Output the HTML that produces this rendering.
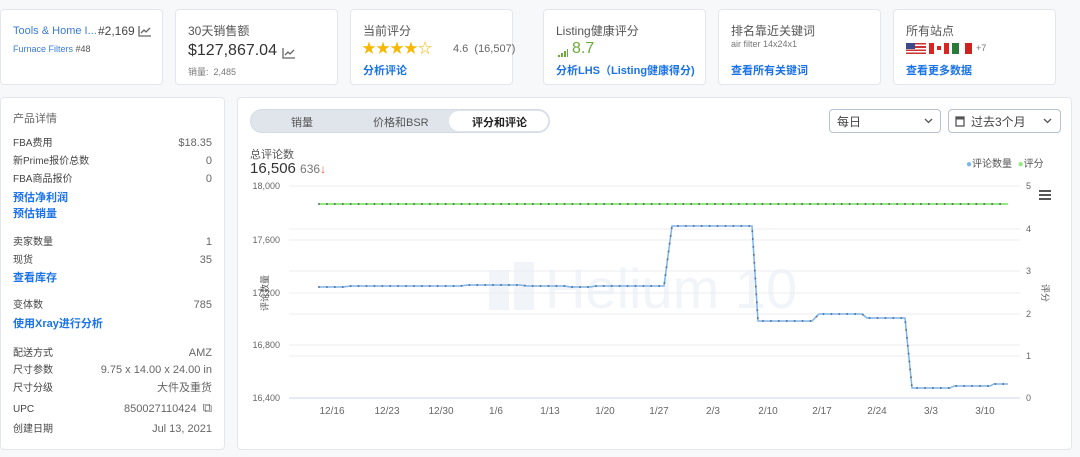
<!DOCTYPE html><html><head><meta charset="utf-8"><style>
*{box-sizing:border-box;margin:0;padding:0}
body{width:1080px;height:457px;background:#f7f8fa;font-family:"Liberation Sans","Noto Sans CJK SC",sans-serif;color:#333;position:relative;overflow:hidden}
.card{position:absolute;background:#fff;border:1px solid #e3e6ec;border-radius:4px}
.t{position:absolute;font-size:12px;color:#555;white-space:nowrap}
.b{color:#1a73e8;font-weight:bold}
.lnk{color:#3a7bd5}
.row{position:absolute;left:12px;right:12px;font-size:10px;color:#444;display:flex;justify-content:space-between;align-items:baseline;line-height:14px}
.row span:last-child{color:#666;font-size:11px}
.blue{position:absolute;left:12px;font-size:11px;color:#1a73e8;font-weight:bold}
</style></head><body>
<div class="card" style="left:0;top:9px;width:163px;height:76px">
<div class="t lnk" style="left:12px;top:15px;font-size:11px">Tools &amp; Home I...</div>
<div class="t" style="left:97px;top:14px;font-size:12px;color:#444">#2,169</div>
<svg style="position:absolute;left:137px;top:15px" width="14" height="12"><path d="M1 1V11H13M3 8L6 5L8 7L12 3" stroke="#666" fill="none" stroke-width="1.3"/></svg>
<div class="t lnk" style="left:12px;top:34px;font-size:9px">Furnace Filters <span style="color:#555">#48</span></div>
</div>
<div class="card" style="left:175px;top:9px;width:163px;height:76px">
<div class="t" style="left:12px;top:12px">30天销售额</div>
<div class="t" style="left:12px;top:32px;font-size:16px;color:#333">$127,867.04</div>
<svg style="position:absolute;left:106px;top:37px" width="14" height="12"><path d="M1 1V11H13M3 8L6 5L8 7L12 3" stroke="#666" fill="none" stroke-width="1.3"/></svg>
<div class="t" style="left:12px;top:55px;font-size:9px;color:#777">销量: &nbsp;2,485</div>
</div>
<div class="card" style="left:350px;top:9px;width:163px;height:76px">
<div class="t" style="left:12px;top:12px">当前评分</div>
<div class="t" style="left:11px;top:28px;font-size:14px;color:#f5b800">★★★★☆</div>
<div class="t" style="left:102px;top:33px;font-size:11px;color:#666">4.6 &nbsp;(16,507)</div>
<div class="t b" style="left:12px;top:52px;font-size:11px">分析评论</div>
</div>
<div class="card" style="left:543px;top:9px;width:163px;height:76px">
<div class="t" style="left:12px;top:12px">Listing健康评分</div>
<svg style="position:absolute;left:14px;top:39px" width="10" height="8"><rect x="0" y="6" width="2" height="2" fill="#6aab3a"/><rect x="3" y="4" width="2" height="4" fill="#6aab3a"/><rect x="6" y="2" width="2" height="6" fill="#6aab3a"/><rect x="9" y="0" width="1" height="8" fill="#6aab3a"/></svg>
<div class="t" style="left:28px;top:30px;font-size:16px;color:#6aab3a">8.7</div>
<div class="t b" style="left:12px;top:52px;font-size:11px">分析LHS（Listing健康得分)</div>
</div>
<div class="card" style="left:718px;top:9px;width:163px;height:76px">
<div class="t" style="left:12px;top:12px">排名靠近关键词</div>
<div class="t" style="left:12px;top:29px;font-size:9px;color:#777">air filter 14x24x1</div>
<div class="t b" style="left:12px;top:52px;font-size:11px">查看所有关键词</div>
</div>
<div class="card" style="left:893px;top:9px;width:163px;height:76px">
<div class="t" style="left:12px;top:12px">所有站点</div>
<div style="position:absolute;left:12px;top:33px;width:20px;height:11px;background:repeating-linear-gradient(#c33 0 1.6px,#fff 1.6px 3.2px)"><div style="width:9px;height:6px;background:#3c4a8a"></div></div>
<div style="position:absolute;left:35px;top:33px;width:20px;height:11px;background:linear-gradient(90deg,#d22 5px,#fff 5px 15px,#d22 15px)"><div style="position:absolute;left:8px;top:3px;width:4px;height:4px;background:#d22"></div></div>
<div style="position:absolute;left:58px;top:33px;width:20px;height:11px;background:linear-gradient(90deg,#2a7a3a 7px,#fff 7px 13px,#c22 13px)"></div>
<div class="t" style="left:82px;top:33px;font-size:9px;color:#777">+7</div>
<div class="t b" style="left:12px;top:52px;font-size:11px">查看更多数据</div>
</div>

<div class="card" style="left:0;top:97px;width:225px;height:353px">
<div class="t" style="left:12px;top:12px;font-size:11px;color:#666">产品详情</div>
<div class="row" style="top:38px"><span>FBA费用</span><span>$18.35</span></div>
<div class="row" style="top:56px"><span>新Prime报价总数</span><span>0</span></div>
<div class="row" style="top:74px"><span>FBA商品报价</span><span>0</span></div>
<div class="blue" style="top:91px">预估净利润</div>
<div class="blue" style="top:107px">预估销量</div>
<div class="row" style="top:137px"><span>卖家数量</span><span>1</span></div>
<div class="row" style="top:155px"><span>现货</span><span>35</span></div>
<div class="blue" style="top:171px">查看库存</div>
<div class="row" style="top:200px"><span>变体数</span><span>785</span></div>
<div class="blue" style="top:217px">使用Xray进行分析</div>
<div class="row" style="top:248px"><span>配送方式</span><span>AMZ</span></div>
<div class="row" style="top:265px"><span>尺寸参数</span><span>9.75 x 14.00 x 24.00 in</span></div>
<div class="row" style="top:283px"><span>尺寸分级</span><span>大件及重货</span></div>
<div class="row" style="top:303px"><span>UPC</span><span>850027110424 &nbsp;<span style="font-size:13px">⧉</span></span></div>
<div class="row" style="top:324px"><span>创建日期</span><span>Jul 13, 2021</span></div>
</div>

<div class="card" style="left:237px;top:97px;width:835px;height:353px"></div>
<div style="position:absolute;left:250px;top:109px;width:300px;height:24px;border-radius:12px;background:#e0e5ec;border:1px solid #d5dbe4"></div>
<div style="position:absolute;left:449px;top:111px;width:99px;height:20px;border-radius:10px;background:#fff"></div>
<div class="t" style="left:291px;top:114px;font-size:11px">销量</div>
<div class="t" style="left:373px;top:114px;font-size:11px">价格和BSR</div>
<div class="t" style="left:472px;top:114px;font-size:11px;font-weight:bold;color:#222">评分和评论</div>
<div style="position:absolute;left:829px;top:109px;width:112px;height:24px;border:1px solid #b8c2d0;border-radius:4px"></div>
<div class="t" style="left:837px;top:113px;font-size:12px;color:#444">每日</div>
<svg style="position:absolute;left:924px;top:118px" width="9" height="6"><path d="M1 1L4.5 4.5L8 1" stroke="#555" fill="none" stroke-width="1.3"/></svg>
<div style="position:absolute;left:948px;top:109px;width:113px;height:24px;border:1px solid #b8c2d0;border-radius:4px"></div>
<svg style="position:absolute;left:955px;top:115px" width="10" height="12"><rect x="1" y="2" width="8" height="9" fill="none" stroke="#555" stroke-width="1.3"/><rect x="1" y="2" width="8" height="2.5" fill="#555"/></svg>
<div class="t" style="left:971px;top:113px;font-size:12px;color:#444">过去3个月</div>
<svg style="position:absolute;left:1043px;top:118px" width="9" height="6"><path d="M1 1L4.5 4.5L8 1" stroke="#555" fill="none" stroke-width="1.3"/></svg>
<div class="t" style="left:250px;top:146px;font-size:11px;color:#555">总评论数</div>
<div class="t" style="left:250px;top:160px;font-size:15px;color:#333">16,506 <span style="font-size:12px;color:#777">636</span><span style="font-size:12px;color:#e53">↓</span></div>
<div class="t" style="left:966px;top:155px;font-size:10px;color:#555"><span style="color:#7cb5ec">●</span>评论数量 &nbsp;<span style="color:#90ed7d">●</span>评分</div>
<div style="position:absolute;left:1039px;top:190px;width:12px;height:2px;background:#555;box-shadow:0 4px #555,0 8px #555"></div>
<svg style="position:absolute;left:0;top:0" width="1080" height="457">
<g fill="#f1f4f8">
<rect x="489" y="270" width="20" height="40"/><rect x="514" y="262" width="20" height="48"/>
</g>
<text x="545" y="308" font-size="56" fill="#f1f4f8" font-family="Liberation Sans">Helium 10</text>
<g fill="none" stroke="#eceef2" stroke-width="1">
<path d="M289 186H1020M289 240H1020M289 293H1020M289 345H1020M289 229H1020M289 271H1020M289 314H1020M289 356H1020"/>
</g>
<path d="M289 398H1020" stroke="#ccd6eb"/>
<g font-family="Liberation Sans" font-size="9" fill="#666" text-anchor="end">
<text x="280" y="189">18,000</text><text x="280" y="243">17,600</text><text x="280" y="296">17,200</text><text x="280" y="348">16,800</text><text x="280" y="401">16,400</text>
</g>
<g font-family="Liberation Sans" font-size="9" fill="#666">
<text x="1026" y="189">5</text><text x="1026" y="232">4</text><text x="1026" y="274">3</text><text x="1026" y="317">2</text><text x="1026" y="359">1</text><text x="1026" y="401">0</text>
</g>
<text transform="translate(268 293) rotate(-90)" font-size="9" fill="#555" text-anchor="middle" font-family="Noto Sans CJK SC">评论数量</text>
<text transform="translate(1042 293) rotate(90)" font-size="9" fill="#555" text-anchor="middle" font-family="Noto Sans CJK SC">评分</text>
<g font-family="Liberation Sans" font-size="10" fill="#666" text-anchor="middle">
<text x="332" y="414">12/16</text><text x="387" y="414">12/23</text><text x="441" y="414">12/30</text><text x="496" y="414">1/6</text><text x="550" y="414">1/13</text><text x="605" y="414">1/20</text><text x="659" y="414">1/27</text><text x="713" y="414">2/3</text><text x="768" y="414">2/10</text><text x="822" y="414">2/17</text><text x="877" y="414">2/24</text><text x="931" y="414">3/3</text><text x="985" y="414">3/10</text>
</g>
<path d="M319 204H1008" stroke="#90ed7d" stroke-width="2"/>
<path d="M319 204H1008" stroke="#667" stroke-width="2" stroke-dasharray="0 7.92" stroke-linecap="round"/>
<polyline fill="none" stroke="#7cb5ec" stroke-width="1.5" points="319,287 343,287 351,286 460,286 468,285 520,285 527,286 565,286 570,287 590,287 596,286 664,286 672,226 752,226 758,321 812,321 819,314 862,314 867,318 905,318 912,388 950,388 954,386 990,386 994,384 1008,384"/>
<polyline fill="none" stroke="#5b7290" stroke-width="2" stroke-dasharray="0 7.92" stroke-linecap="round" points="319,287 343,287 351,286 460,286 468,285 520,285 527,286 565,286 570,287 590,287 596,286 664,286 672,226 752,226 758,321 812,321 819,314 862,314 867,318 905,318 912,388 950,388 954,386 990,386 994,384 1008,384"/>
</svg>
</body></html>
